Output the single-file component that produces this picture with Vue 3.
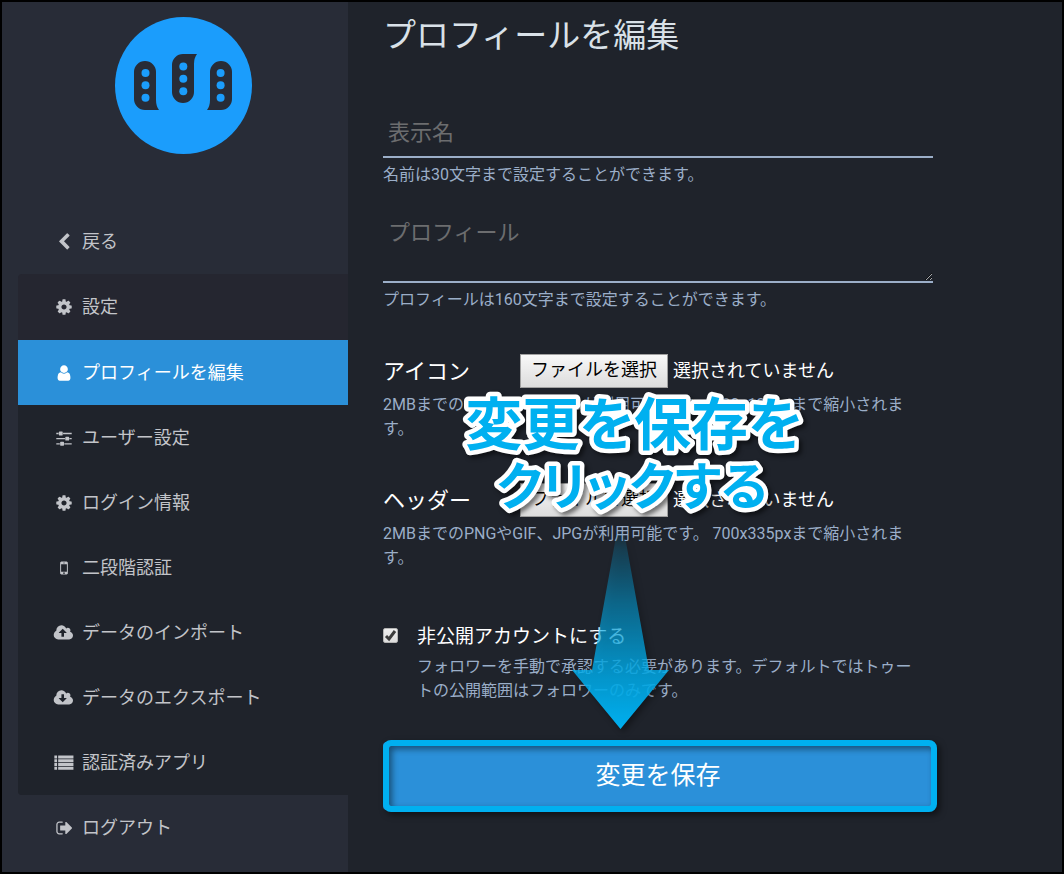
<script setup>

import {ref} from "vue";

const icons = {
  back: 'M1427 301l-531 531 531 531q19 19 19 45t-19 45l-166 166q-19 19-45 19t-45-19l-742-742q-19-19-19-45t19-45l742-742q19-19 45-19t45 19l166 166q19 19 19 45t-19 45z',
  cog: 'M1152 896q0-106-75-181t-181-75-181 75-75 181 75 181 181 75 181-75 75-181zm512-109v222q0 12-8 23t-20 13l-185 28q-19 54-39 91 35 50 107 138 10 12 10 25t-9 23q-27 37-99 108t-94 71q-12 0-26-9l-138-108q-44 23-91 38-16 136-29 186-7 28-36 28h-222q-14 0-24.5-8.5t-11.5-21.5l-28-184q-49-16-90-37l-141 107q-10 9-25 9-14 0-25-11-126-114-165-168-7-10-7-23 0-12 8-23 15-21 51-66.5t54-70.5q-27-50-41-99l-183-27q-13-2-21-12.5t-8-23.5v-222q0-12 8-23t19-13l186-28q14-46 39-92-40-57-107-138-10-12-10-24 0-10 9-23 26-36 98.5-107.5t94.5-71.5q13 0 26 10l138 107q44-23 91-38 16-136 29-186 7-28 36-28h222q14 0 24.5 8.5t11.5 21.5l28 184q49 16 90 37l142-107q9-9 24-9 13 0 25 10 129 119 165 170 7 8 7 22 0 12-8 23-15 21-51 66.5t-54 70.5q26 50 41 98l183 28q13 2 21 12.5t8 23.5z',
  user: 'M1536 1399q0 109-62.5 187t-150.5 78h-854q-88 0-150.5-78t-62.5-187q0-85 8.5-160.5t31.5-152 58.5-131 94-89 134.5-34.5q131 128 313 128t313-128q76 0 134.5 34.5t94 89 58.5 131 31.5 152 8.5 160.5zm-256-887q0 159-112.5 271.5t-271.5 112.5-271.5-112.5-112.5-271.5 112.5-271.5 271.5-112.5 271.5 112.5 112.5 271.5z',
  sliders: 'M480 1408v128h-352v-128h352zm352-128q26 0 45 19t19 45v256q0 26-19 45t-45 19h-256q-26 0-45-19t-19-45v-256q0-26 19-45t45-19h256zm160-384v128h-864v-128h864zm-640-512v128h-224v-128h224zm1312 1024v128h-736v-128h736zm-960-1152q26 0 45 19t19 45v256q0 26-19 45t-45 19h-256q-26 0-45-19t-19-45v-256q0-26 19-45t45-19h256zm640 512q26 0 45 19t19 45v256q0 26-19 45t-45 19h-256q-26 0-45-19t-19-45v-256q0-26 19-45t45-19h256zm320 128v128h-224v-128h224zm0-512v128h-864v-128h864z',
  mobile: 'M976 1408q0-33-23.5-56.5t-56.5-23.5-56.5 23.5-23.5 56.5 23.5 56.5 56.5 23.5 56.5-23.5 23.5-56.5zm208-160v-704q0-13-9.5-22.5t-22.5-9.5h-512q-13 0-22.5 9.5t-9.5 22.5v704q0 13 9.5 22.5t22.5 9.5h512q13 0 22.5-9.5t9.5-22.5zm-192-848q0-16-16-16h-160q-16 0-16 16t16 16h160q16 0 16-16zm288-16v1024q0 52-38 90t-90 38h-512q-52 0-90-38t-38-90v-1024q0-52 38-90t90-38h512q52 0 90 38t38 90z',
  upload: 'M1216 864q0-14-9-23l-352-352q-9-9-23-9t-23 9l-351 351q-10 12-10 24 0 14 9 23t23 9h224v352q0 13 9.5 22.5t22.5 9.5h192q13 0 22.5-9.5t9.5-22.5v-352h224q13 0 22.5-9.5t9.5-22.5zm640 288q0 159-112.5 271.5t-271.5 112.5h-1088q-185 0-316.5-131.5t-131.5-316.5q0-130 70-240t188-165q-2-30-2-43 0-212 150-362t362-150q156 0 285.5 87t188.5 231q71-62 166-62 106 0 181 75t75 181q0 76-41 138 130 31 213.5 135.5t83.5 238.5z',
  download: 'M1216 928q0-14-9-23t-23-9h-224v-352q0-13-9.5-22.5t-22.5-9.5h-192q-13 0-22.5 9.5t-9.5 22.5v352h-224q-13 0-22.5 9.5t-9.5 22.5q0 14 9 23l352 352q9 9 23 9t23-9l351-351q10-12 10-24zm640 224q0 159-112.5 271.5t-271.5 112.5h-1088q-185 0-316.5-131.5t-131.5-316.5q0-130 70-240t188-165q-2-30-2-43 0-212 150-362t362-150q156 0 285.5 87t188.5 231q71-62 166-62 106 0 181 75t75 181q0 76-41 138 130 31 213.5 135.5t83.5 238.5z',
  list: 'M0 140h270v300h-270zM380 140h1520v300h-1520zM0 520h270v300h-270zM380 520h1520v300h-1520zM0 900h270v300h-270zM380 900h1520v300h-1520zM0 1280h270v300h-270zM380 1280h1520v300h-1520z',
  logout: 'M704 1440q0 4 1 20t.5 26.5-3 23.5-10 19.5-20.5 6.5h-320q-119 0-203.5-84.5t-84.5-203.5v-704q0-119 84.5-203.5t203.5-84.5h320q13 0 22.5 9.5t9.5 22.5q0 4 1 20t.5 26.5-3 23.5-10 19.5-20.5 6.5h-320q-66 0-113 47t-47 113v704q0 66 47 113t113 47h312l11.5 1 11.5 3 8 5.5 7 9 2 13.5zm928-544q0 26-19 45l-544 544q-19 19-45 19t-45-19-19-45v-288h-448q-26 0-45-19t-19-45v-384q0-26 19-45t45-19h448v-288q0-26 19-45t45-19 45 19l544 544q19 19 19 45z',
};

const menu = [
  {icon: 'back', label: '戻る'},
  {
    icon: 'cog',
    label: '設定',
    children: [
      {icon: 'user', label: 'プロフィールを編集'},
      {icon: 'sliders', label: 'ユーザー設定'},
      {icon: 'cog', label: 'ログイン情報'},
      {icon: 'mobile', label: '二段階認証'},
      {icon: 'upload', label: 'データのインポート'},
      {icon: 'download', label: 'データのエクスポート'},
      {icon: 'list', label: '認証済みアプリ'},
    ],
  },
  {icon: 'logout', label: 'ログアウト'},
];

const files = [
  {id: 'avatar', label: 'アイコン', hint: '2MBまでのPNGやGIF、JPGが利用可能です。 120x120pxまで縮小されま'},
  {id: 'header', label: 'ヘッダー', hint: '2MBまでのPNGやGIF、JPGが利用可能です。 700x335pxまで縮小されま'},
];

const active = ref('プロフィールを編集');
const displayName = ref('');
const note = ref('');
const locked = ref(true);

</script>
<template>
  <div class="admin">
    <aside class="sidebar">
      <a class="logo" href="#" aria-label="ホーム">
        <svg viewBox="0 0 137 137">
          <circle class="logo-disc" cx="68.5" cy="68.5" r="68.5"/>
          <path d="M19 55a11 11 0 0 1 22 0v28q0 6 3 10H30a11 11 0 0 1-11-11z"/>
          <path d="M57 48a11 11 0 0 1 11-11h14q-3 4-3 10v28a11 11 0 0 1-22 0z"/>
          <path d="M117 55a11 11 0 0 0-22 0v28q0 6-3 10h14a11 11 0 0 0 11-11z"/>
          <g class="logo-disc">
            <circle v-for="n in 3" :key="`l${n}`" cx="30.5" :cy="43.5 + n * 12.4" r="4"/>
            <circle v-for="n in 3" :key="`m${n}`" cx="68.3" :cy="37 + n * 12.4" r="4"/>
            <circle v-for="n in 3" :key="`r${n}`" cx="105.6" :cy="43.5 + n * 12.4" r="4"/>
          </g>
        </svg>
      </a>
      <ul class="menu">
        <li v-for="item in menu" :key="item.label" :class="{'menu-group': item.children}">
          <a class="menu-link" href="#">
            <svg class="menu-icon" :viewBox="item.icon === 'logout' ? '0 0 1664 1792' : '0 0 1792 1792'"><path :d="icons[item.icon]"/></svg>
            <span class="menu-text">{{ item.label }}</span>
          </a>
          <ul v-if="item.children" class="submenu">
            <li v-for="child in item.children" :key="child.label">
              <a :class="['menu-link', {'menu-link--active': active === child.label}]" href="#" @click.prevent="active = child.label">
                <svg class="menu-icon" :viewBox="['upload', 'download', 'list'].includes(child.icon) ? '0 0 1920 1792' : '0 0 1792 1792'"><path :d="icons[child.icon]"/></svg>
                <span class="menu-text">{{ child.label }}</span>
              </a>
            </li>
          </ul>
        </li>
      </ul>
    </aside>
    <main class="content">
      <h1>プロフィールを編集</h1>
      <form class="form" @submit.prevent>
        <div class="field">
          <input id="name" v-model="displayName" class="text-input" type="text" maxlength="30" placeholder="表示名" aria-label="表示名"/>
          <p class="hint">名前は30文字まで設定することができます。</p>
        </div>
        <div class="field">
          <textarea id="note" v-model="note" class="text-input text-input--area" maxlength="160" placeholder="プロフィール" aria-label="プロフィール"></textarea>
          <p class="hint">プロフィールは160文字まで設定することができます。</p>
        </div>
        <div v-for="file in files" :key="file.id" class="field field--file">
          <div class="file-row">
            <label class="file-label" :for="file.id">{{ file.label }}</label>
            <div class="file">
              <input :id="file.id" class="file-input" type="file" accept="image/*"/>
              <span class="file-button">ファイルを選択</span>
              <span class="file-status">選択されていません</span>
            </div>
          </div>
          <p class="hint">{{ file.hint }}<br/>す。</p>
        </div>
        <div class="field field--check">
          <span class="check">
            <input id="locked" v-model="locked" type="checkbox"/>
            <svg v-if="locked" viewBox="0 0 15 15"><path d="M3 8l3 3 6-8"/></svg>
          </span>
          <div>
            <label class="check-label" for="locked">非公開アカウントにする</label>
            <p class="hint">フォロワーを手動で承認する必要があります。デフォルトではトゥー<br/>トの公開範囲はフォロワーのみです。</p>
          </div>
        </div>
        <div class="submit">
          <button type="submit">変更を保存</button>
          <span class="submit-ring"></span>
          <svg class="arrow" viewBox="0 0 100 210">
            <defs>
              <linearGradient id="arrow-fill" x1="0" y1="0" x2="0" y2="1">
                <stop offset=".04" stop-color="#00b0f0" stop-opacity="0"/>
                <stop offset=".14" stop-color="#00b0f0" stop-opacity=".2"/>
                <stop offset=".4" stop-color="#00b0f0" stop-opacity=".5"/>
                <stop offset=".75" stop-color="#00b0f0" stop-opacity=".82"/>
                <stop offset="1" stop-color="#00b0f0"/>
              </linearGradient>
            </defs>
            <path fill="url(#arrow-fill)" d="M49 0h3l27 150h20L50.500 209 2 150h20z"/>
          </svg>
          <svg class="callout" viewBox="0 0 500 130">
            <text x="251" y="55" font-size="57">変更を保存を</text>
            <text x="249" y="115" font-size="51">クリックする</text>
          </svg>
        </div>
      </form>
    </main>
  </div>
</template>
<style>
body {
  background: #1f232b;
}
</style>
<style scoped>
.admin {
  display: flex;
  box-sizing: border-box;
  min-height: 100vh;
  border: 2px solid #000;
  background: #1f232b;
  color: #fff;
  font-family: Roboto, "Noto Sans CJK JP", sans-serif;
  font-size: 18px;
  overflow: hidden;
}

.sidebar {
  flex: 0 0 330px;
  padding-left: 16px;
  background: #282c37;
}

.logo {
  display: block;
  width: 137px;
  margin: 15px auto 55px;
}

.logo svg {
  display: block;
  fill: #282c37;
}

.logo .logo-disc {
  fill: #1b9dfc;
}

.menu, .submenu {
  margin: 0;
  padding: 0;
  list-style: none;
}

.menu-link {
  display: flex;
  align-items: center;
  gap: 6px;
  height: 65px;
  padding-left: 34px;
  color: #c2c4c9;
  text-decoration: none;
}

.menu-group {
  background: #252630;
  border-radius: 4px 0 0 4px;
  overflow: hidden;
}

.menu-group > .menu-link {
  height: 66px;
}

.submenu {
  background: #1f232b;
}

.menu-link--active {
  background: #2b90d9;
  color: #fff;
}

.menu-icon {
  width: 24px;
  height: 18px;
  fill: currentColor;
}

.menu-text, .file-label, .file-status {
  padding-bottom: 4px;
}

.content {
  flex: 1;
  min-width: 0;
  padding: 14px 35px 0;
}

h1 {
  margin: 0 0 52px;
  color: #d9e1e8;
  font-size: 33px;
  line-height: 40px;
  font-weight: 400;
}

.form {
  max-width: 550px;
}

.field {
  margin-bottom: 22px;
}

.field:nth-child(2) {
  margin-bottom: 42px;
}

.field--file {
  margin-bottom: 42px;
}

.text-input {
  display: block;
  box-sizing: border-box;
  width: 100%;
  height: 50px;
  padding: 0 5px;
  border: 0;
  border-bottom: 2px solid #9baec8;
  outline: 0;
  background: transparent;
  color: #fff;
  font: inherit;
  font-size: 22px;
}

.text-input::placeholder {
  color: #6c6d6f;
}

.text-input--area {
  height: 74px;
  padding: 9px 5px;
  line-height: 30px;
  resize: vertical;
}

.hint {
  margin: 5px 0 0;
  color: #9baec8;
  font-size: 16px;
  line-height: 24px;
}

.file-row {
  display: flex;
  align-items: center;
  height: 34px;
}

.file-label {
  width: 137px;
  font-size: 22px;
}

.file {
  position: relative;
  display: flex;
  align-items: center;
  gap: 5px;
}

.file-input {
  position: absolute;
  inset: 0;
  width: 100%;
  opacity: 0;
}

.file-button {
  box-sizing: border-box;
  height: 34px;
  padding: 0 10px;
  border: 1px solid #a0a0a0;
  background: linear-gradient(#f8f8f8, #dcdcdc);
  color: #000;
  line-height: 30px;
}

.field--check {
  display: flex;
  gap: 19px;
  margin: 54px 0 39px;
}

.check {
  display: grid;
  width: 15px;
  height: 15px;
  margin-top: 4px;
}

.check input {
  grid-area: 1 / 1;
  width: 15px;
  height: 15px;
  margin: 0;
  border: 1px solid #b4b4b4;
  border-radius: 2px;
  background: linear-gradient(#eee, #ddd);
  appearance: none;
}

.check svg {
  grid-area: 1 / 1;
  fill: none;
  stroke: #3c3c3c;
  stroke-width: 3;
  pointer-events: none;
}

.check-label {
  display: block;
  font-size: 19px;
  line-height: 26px;
}

.submit {
  position: relative;
}

.submit button {
  display: block;
  width: 100%;
  height: 68px;
  padding: 0 0 6px;
  border: 0;
  border-radius: 4px;
  background: #2b90d9;
  color: #fff;
  font: inherit;
  font-size: 25px;
}

.submit-ring {
  position: absolute;
  inset: -2px -4px -2px 0;
  border: 6px solid #00b0f0;
  border-radius: 8px;
  box-shadow: 3px 3px 6px rgba(0, 0, 0, .5), inset 3px 3px 6px rgba(0, 0, 0, .45);
  pointer-events: none;
}

.arrow {
  position: absolute;
  left: 187px;
  bottom: 80px;
  width: 100px;
  height: 210px;
  filter: drop-shadow(3px 3px 3px rgba(0, 0, 0, .4));
  pointer-events: none;
}

.callout {
  position: absolute;
  left: 0;
  bottom: 290px;
  width: 500px;
  height: 130px;
  overflow: visible;
  filter: drop-shadow(3px 3px 2px rgba(0, 0, 0, .5));
  pointer-events: none;
}

.callout text {
  fill: #00b0f0;
  stroke: #fff;
  stroke-width: 9px;
  stroke-linejoin: round;
  paint-order: stroke fill;
  font-weight: 700;
  font-feature-settings: "palt";
  text-anchor: middle;
}
</style>
